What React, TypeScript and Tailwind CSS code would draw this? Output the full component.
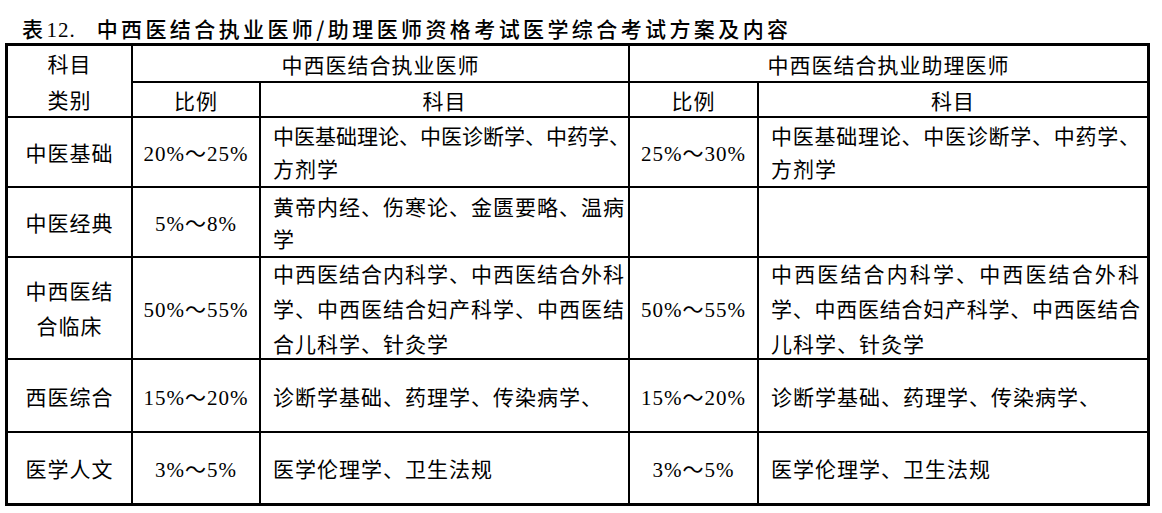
import React from 'react'

const FONT = "font-['Liberation_Serif','Noto_Sans_CJK_SC',serif]"

const Center: React.FC<{ lines: string[]; className?: string; lead?: string }> = ({
  lines,
  className = '',
  lead = 'leading-[34px]',
}) => (
  <div className={`bg-white flex flex-col items-center justify-center text-center pt-[4px] ${className}`}>
    {lines.map((l, i) => (
      <div key={i} className={`${lead} whitespace-nowrap`}>{l}</div>
    ))}
  </div>
)

const Content: React.FC<{ lines: string[]; lead: string }> = ({ lines, lead }) => (
  <div className="bg-white flex flex-col justify-center pl-[12px] pr-[7px] pt-[4px] min-w-0">
    {lines.map((l, i) => (
      <div
        key={i}
        className={`${lead} whitespace-nowrap ${l.length >= 17 ? 'tracking-[0px]' : ''} ${
          i < lines.length - 1 ? 'text-justify [text-align-last:justify]' : ''
        }`}
      >
        {l}
      </div>
    ))}
  </div>
)

interface Row {
  name: string[]
  r1: string
  s1: string[]
  r2: string
  s2: string[]
  lead: string
}

const rows: Row[] = [
  {
    name: ['中医基础'],
    r1: '20%～25%',
    s1: ['中医基础理论、中医诊断学、中药学、', '方剂学'],
    r2: '25%～30%',
    s2: ['中医基础理论、中医诊断学、中药学、', '方剂学'],
    lead: 'leading-[33px]',
  },
  {
    name: ['中医经典'],
    r1: '5%～8%',
    s1: ['黄帝内经、伤寒论、金匮要略、温病', '学'],
    r2: '',
    s2: [],
    lead: 'leading-[32px]',
  },
  {
    name: ['中西医结', '合临床'],
    r1: '50%～55%',
    s1: ['中西医结合内科学、中西医结合外科', '学、中西医结合妇产科学、中西医结', '合儿科学、针灸学'],
    r2: '50%～55%',
    s2: ['中西医结合内科学、中西医结合外科', '学、中西医结合妇产科学、中西医结合', '儿科学、针灸学'],
    lead: 'leading-[35px]',
  },
  {
    name: ['西医综合'],
    r1: '15%～20%',
    s1: ['诊断学基础、药理学、传染病学、'],
    r2: '15%～20%',
    s2: ['诊断学基础、药理学、传染病学、'],
    lead: 'leading-[34px]',
  },
  {
    name: ['医学人文'],
    r1: '3%～5%',
    s1: ['医学伦理学、卫生法规'],
    r2: '3%～5%',
    s2: ['医学伦理学、卫生法规'],
    lead: 'leading-[34px]',
  },
]

export default function App() {
  return (
    <div className={`w-[1162px] h-[513px] bg-white text-black ${FONT}`}>
      <div className="h-[43px] pl-[22px] pt-[14px] leading-[28px] text-[21px] tracking-[3.4px] whitespace-nowrap font-['Noto_Sans_CJK_SC',sans-serif] font-medium">
        表<span className="font-['Liberation_Serif',serif] font-normal tracking-[1px]">12.</span>
        <span className="ml-[21px]">中西医结合执业医师/助理医师资格考试医学综合考试方案及内容</span>
      </div>

      <div className="ml-[5px] w-[1145px] grid grid-cols-[123px_126px_367px_127px_388px] grid-rows-[35px_33px_68px_68px_100px_71px_70px] gap-[2px] bg-black p-[3px] text-[21px] tracking-[1px]">
        <Center lines={['科目', '类别']} className="row-span-2" lead="leading-[36px]" />
        <Center lines={['中西医结合执业医师']} className="col-span-2" />
        <Center lines={['中西医结合执业助理医师']} className="col-span-2" />
        <Center lines={['比例']} />
        <Center lines={['科目']} />
        <Center lines={['比例']} />
        <Center lines={['科目']} />

        {rows.map((r, i) => (
          <React.Fragment key={i}>
            <Center lines={r.name} lead={r.lead} />
            <Center lines={[r.r1]} />
            <Content lines={r.s1} lead={r.lead} />
            <Center lines={r.r2 ? [r.r2] : []} />
            <Content lines={r.s2} lead={r.lead} />
          </React.Fragment>
        ))}
      </div>
    </div>
  )
}
